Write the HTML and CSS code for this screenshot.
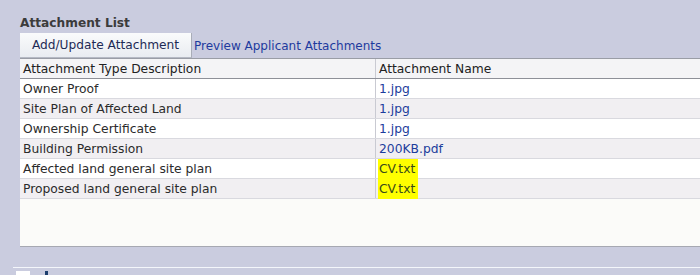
FILE: index.html
```html
<!DOCTYPE html>
<html>
  <head>
    <title>Attachment List</title>
    <meta charset="utf-8" />
    <link rel="stylesheet" href="styles.css">
  </head>
  <body>
    <div class="region">
      <h2 class="region-title">Attachment List</h2>
      <div class="toolbar">
        <button class="btn">Add/Update Attachment</button>
        <a class="link" href="#">Preview Applicant Attachments</a>
      </div>
      <div class="grid">
        <table class="att-table">
          <thead>
            <tr>
              <th class="col-desc">Attachment Type Description</th>
              <th>Attachment Name</th>
            </tr>
          </thead>
          <tbody>
            <tr><td>Owner Proof</td><td class="file">1.jpg</td></tr>
            <tr class="alt"><td>Site Plan of Affected Land</td><td class="file">1.jpg</td></tr>
            <tr><td>Ownership Certificate</td><td class="file">1.jpg</td></tr>
            <tr class="alt"><td>Building Permission</td><td class="file">200KB.pdf</td></tr>
            <tr><td>Affected land general site plan</td><td class="file"><span class="mark">CV.txt</span></td></tr>
            <tr class="alt"><td>Proposed land general site plan</td><td class="file"><span class="mark">CV.txt</span></td></tr>
          </tbody>
        </table>
        <div class="grid-empty"></div>
      </div>
    </div>
    <div class="next-region">
      <span class="check"></span>
      <span class="next-label"></span>
    </div>
  </body>
</html>
```

FILE: styles.css
```css
body {
  margin: 0;
  background-color: #caccdf;
  font-family: "DejaVu Sans", Tahoma, sans-serif;
  font-size: 12px;
  color: #2b2b2b;
  overflow: hidden;
}
.region {
  padding: 14px 0 0 20px;
}
.region-title {
  margin: 0;
  font-size: 12.2px;
  font-weight: bold;
  color: #3b3b3b;
  line-height: 19px;
}
.toolbar {
  display: flex;
  align-items: center;
  height: 25px;
}
.btn {
  height: 25px;
  width: 172px;
  padding: 0;
  margin: 0;
  border: 0;
  border-right: 1px solid #a9adb8;
  border-bottom: 1px solid #b5b9c4;
  background: linear-gradient(#fafbfc, #e9ecf1);
  font-family: inherit;
  font-size: 12.2px;
  color: #1d2a55;
}
.link {
  margin-left: 2px;
  color: #1e3a9e;
  text-decoration: none;
}
.grid {
  border-top: 1px solid #9a9da6;
  border-bottom: 1px solid #a6a8b2;
  background-color: #fbfbf9;
}
.att-table {
  width: 100%;
  border-collapse: collapse;
  font-size: 12.3px;
}
.att-table th,
.att-table td {
  height: 19px;
  padding: 0 0 0 3px;
  text-align: left;
  font-weight: normal;
  border-bottom: 1px solid #d9d9df;
  white-space: nowrap;
}
.att-table th {
  background-color: #f4f4f6;
  color: #222;
  border-bottom: 1px solid #8e9098;
}
.att-table td:first-child,
.att-table th:first-child {
  border-right: 1px solid #c9cad2;
}
.col-desc {
  width: 352px;
}
.att-table tbody tr {
  background-color: #ffffff;
}
.att-table tbody tr.alt {
  background-color: #f1eff2;
}
.file {
  color: #1c3d9c;
}
.mark {
  background-color: #ffff00;
  color: #3a4a1a;
  padding: 3px 3px 3px 1px;
  margin-left: -1px;
}
.grid-empty {
  height: 47px;
}
.next-region {
  margin-top: 20px;
  margin-left: 13px;
  border-top: 1px solid #f4f6fb;
  padding: 3px 0 0 3px;
  display: flex;
  gap: 15px;
}
.check {
  width: 14px;
  height: 14px;
  background-color: #fff;
}
.next-label {
  width: 3px;
  height: 5px;
  background-color: #1c3d6c;
}
```
